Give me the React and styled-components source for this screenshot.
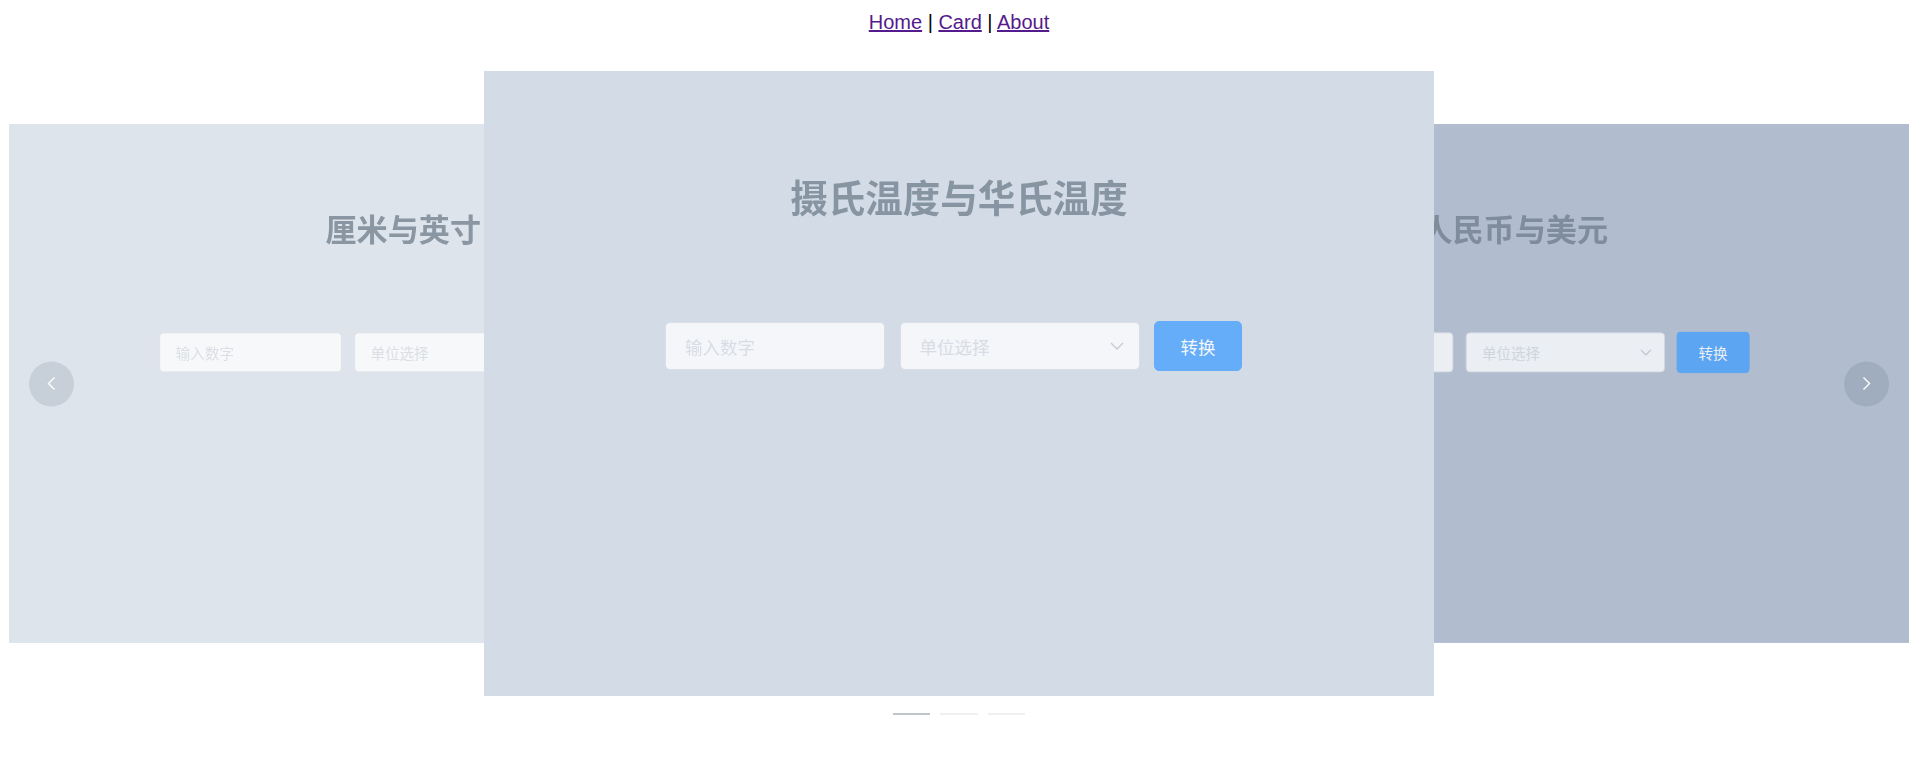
import styled, { createGlobalStyle } from "styled-components";

const STAGE_WIDTH = 1900;
const CARD_SCALE = 0.83;

const GlobalStyle = createGlobalStyle`
  body {
    margin: 0;
    font-family: "Liberation Sans", "Noto Sans CJK SC", sans-serif;
    background: #fff;
  }
`;

const Page = styled.div`
  padding: 10px 10px 0 9px;
`;

const Nav = styled.nav`
  text-align: center;
  font-size: 20px;
  line-height: 23px;
  padding-top: 1px;
  color: #000;

  a {
    color: #551a8b;
    text-decoration: underline;
  }
`;

const Carousel = styled.div`
  position: relative;
  height: 625px;
  margin-top: 37px;
  overflow: hidden;
`;

const Slide = styled.div`
  position: absolute;
  top: 0;
  left: 0;
  width: 50%;
  height: 100%;
  overflow: hidden;
  background: ${(p) => p.$bg};
  z-index: ${(p) => (p.$active ? 2 : 1)};
  transform: translateX(${(p) => p.$offset}px) scale(${(p) => p.$scale});
`;

/* sits under the content: the translucent content paints after it */
const Mask = styled.div`
  position: absolute;
  inset: 0;
  background: #fff;
  opacity: 0.24;
`;

const Content = styled.div`
  display: flex;
  flex-direction: column;
  align-items: center;
  opacity: 0.75;
`;

const Title = styled.h2`
  margin: 0;
  padding-top: 100px;
  font-family: "Noto Sans CJK SC", sans-serif;
  font-size: 37.5px;
  line-height: 50px;
  font-weight: 700;
  color: #6e7c8a;
`;

const Form = styled.div`
  display: flex;
  align-items: center;
  gap: 14.5px;
  margin-top: 100px;
  padding-right: 11px;
  font-family: "Noto Sans CJK SC", sans-serif;
`;

const NumberInput = styled.input`
  box-sizing: border-box;
  width: 220px;
  height: 48px;
  padding: 0 18.75px;
  border: 1.25px solid #dcdfe6;
  border-radius: 5px;
  background: #fff;
  font-family: inherit;
  font-size: 17.5px;
  outline: none;

  &::placeholder {
    color: #dadde3;
  }
`;

const SelectBox = styled.div`
  box-sizing: border-box;
  display: flex;
  align-items: center;
  justify-content: space-between;
  width: 240px;
  height: 48px;
  padding: 0 15px 0 18.75px;
  border: 1.25px solid #dcdfe6;
  border-radius: 5px;
  background: #fff;
  font-size: 17.5px;
  color: #dadde3;
`;

const ConvertButton = styled.button`
  box-sizing: border-box;
  width: 87.5px;
  height: 50px;
  border: 1.25px solid #409eff;
  border-radius: 5px;
  background: #409eff;
  color: #fff;
  font-family: inherit;
  font-size: 17.5px;
  cursor: pointer;
`;

const ArrowButton = styled.button`
  position: absolute;
  top: 50%;
  ${(p) => (p.$side === "left" ? "left: 20px;" : "right: 20px;")}
  transform: translateY(-50%);
  z-index: 3;
  width: 45px;
  height: 45px;
  padding: 0;
  border: none;
  border-radius: 50%;
  background: rgba(31, 45, 61, 0.11);
  display: grid;
  place-items: center;
  cursor: pointer;
`;

const Indicators = styled.ul`
  display: flex;
  justify-content: center;
  margin: 0;
  padding: 0;
  list-style: none;
`;

const Indicator = styled.li`
  padding: 16.5px 5px;
  cursor: pointer;

  span {
    display: block;
    width: 37.5px;
    height: 2.5px;
    background: #c0c4cc;
    opacity: ${(p) => (p.$active ? 1 : 0.24)};
  }
`;

const slides = [
  { title: "摄氏温度与华氏温度", bg: "#d3dce6" },
  { title: "人民币与美元", bg: "#99a9bf" },
  { title: "厘米与英寸", bg: "#d3dce6" },
];

// same placement rule as the element-ui card carousel
const cardOffset = (pos) => {
  if (pos === 0) return STAGE_WIDTH / 4;
  return (STAGE_WIDTH * ((2 - CARD_SCALE) * pos + 1)) / 4;
};

const Chevron = ({ dir }) => (
  <svg width="9" height="14" viewBox="0 0 9 14" fill="none">
    <polyline
      points={dir === "left" ? "7.5,1 1.5,7 7.5,13" : "1.5,1 7.5,7 1.5,13"}
      stroke="#fff"
      strokeWidth="1.4"
    />
  </svg>
);

const DownArrow = () => (
  <svg width="14" height="8" viewBox="0 0 14 8" fill="none">
    <polyline points="1,1 7,7 13,1" stroke="#c0c4cc" strokeWidth="1.3" />
  </svg>
);

const App = () => {
  const active = 0;

  return (
    <Page>
      <GlobalStyle />
      <Nav>
        <a href="#/">Home</a> | <a href="#/card">Card</a> |{" "}
        <a href="#/about">About</a>
      </Nav>
      <Carousel>
        <ArrowButton $side="left">
          <Chevron dir="left" />
        </ArrowButton>
        {slides.map((s, i) => {
          let pos = i - active;
          if (pos > 1) pos -= slides.length;
          const isActive = pos === 0;
          return (
            <Slide
              key={s.title}
              $bg={s.bg}
              $active={isActive}
              $offset={cardOffset(pos)}
              $scale={isActive ? 1 : CARD_SCALE}
            >
              {!isActive && <Mask />}
              <Content>
                <Title>{s.title}</Title>
                <Form>
                  <NumberInput placeholder="输入数字" />
                  <SelectBox>
                    <span>单位选择</span>
                    <DownArrow />
                  </SelectBox>
                  <ConvertButton>转换</ConvertButton>
                </Form>
              </Content>
            </Slide>
          );
        })}
        <ArrowButton $side="right">
          <Chevron dir="right" />
        </ArrowButton>
      </Carousel>
      <Indicators>
        {slides.map((s, i) => (
          <Indicator key={s.title} $active={i === active}>
            <span />
          </Indicator>
        ))}
      </Indicators>
    </Page>
  );
};

export default App;
